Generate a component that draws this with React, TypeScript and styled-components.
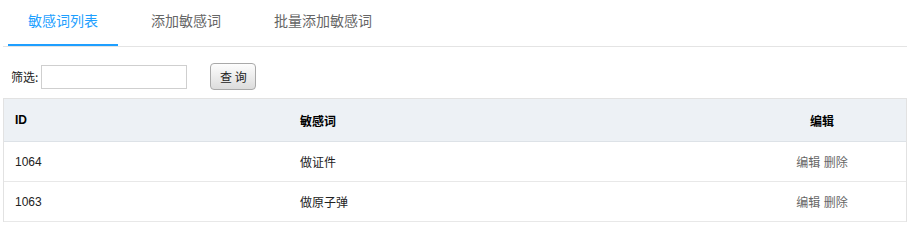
import React from "react";
import styled, { createGlobalStyle } from "styled-components";

const Global = createGlobalStyle`
  html, body { margin: 0; padding: 0; background: #fff; }
  body { font-family: "Liberation Sans", "Noto Sans CJK SC", sans-serif; color: #333; }
  * { box-sizing: border-box; }
`;

const Wrapper = styled.div`
  margin: 0 3px 0 3px;
`;

const TabBar = styled.ul`
  display: flex;
  gap: 13px;
  margin: 0;
  padding: 0 0 0 5px;
  list-style: none;
  border-bottom: 1px solid #e4e4e4;
`;

const Tab = styled.li<{ $active?: boolean }>`
  padding: 0 20px 4px;
  line-height: 40px;
  font-size: 14px;
  font-family: "Noto Sans CJK SC", sans-serif;
  color: ${(p) => (p.$active ? "#1E9FFF" : "#666")};
  border-bottom: 2px solid ${(p) => (p.$active ? "#1E9FFF" : "transparent")};
  cursor: pointer;
`;

const FilterRow = styled.div`
  display: flex;
  align-items: center;
  height: 27px;
  margin: 16px 0 8px;
  padding-left: 8px;
`;

const Label = styled.span`
  font-size: 12px;
  font-family: "Noto Sans CJK SC", sans-serif;
  color: #222;
`;

const Input = styled.input`
  margin-left: 3px;
  width: 146px;
  height: 24px;
  border: 1px solid #cfcfcf;
  padding: 0 4px;
  outline: none;
  font-size: 12px;
`;

const Button = styled.button`
  margin-left: 23px;
  width: 46px;
  height: 27px;
  border: 1px solid #a9a9a9;
  border-radius: 4px;
  background: linear-gradient(#fdfdfd, #dcdcdc);
  font-size: 12px;
  font-family: "Noto Sans CJK SC", sans-serif;
  color: #222;
  padding: 0;
  white-space: pre;
`;

const Table = styled.div`
  border: 1px solid #e2e2e2;
  border-bottom: none;
`;

const Row = styled.div<{ $head?: boolean }>`
  display: grid;
  grid-template-columns: 285px 449px 1fr;
  align-items: center;
  height: ${(p) => (p.$head ? "43px" : "40px")};
  background: ${(p) => (p.$head ? "#edf1f5" : "#fff")};
  border-bottom: 1px solid ${(p) => (p.$head ? "#dde2e7" : "#e8e8e8")};
  font-size: 12px;
  font-weight: ${(p) => (p.$head ? "bold" : "normal")};
  color: ${(p) => (p.$head ? "#000" : "#222")};
`;

const Cell = styled.div<{ $center?: boolean }>`
  padding-left: ${(p) => (p.$center ? "0" : "11px")};
  text-align: ${(p) => (p.$center ? "center" : "left")};
`;

const Action = styled.a`
  color: #666;
  text-decoration: none;
  cursor: pointer;
`;

const rows = [
  { id: 1064, word: "做证件" },
  { id: 1063, word: "做原子弹" },
];

export default function App() {
  return (
    <Wrapper>
      <Global />
      <TabBar>
        <Tab $active>敏感词列表</Tab>
        <Tab>添加敏感词</Tab>
        <Tab>批量添加敏感词</Tab>
      </TabBar>
      <FilterRow>
        <Label>筛选:</Label>
        <Input />
        <Button>{"查 询"}</Button>
      </FilterRow>
      <Table>
        <Row $head>
          <Cell>ID</Cell>
          <Cell>敏感词</Cell>
          <Cell $center>编辑</Cell>
        </Row>
        {rows.map((r) => (
          <Row key={r.id}>
            <Cell>{r.id}</Cell>
            <Cell>{r.word}</Cell>
            <Cell $center>
              <Action>编辑</Action> <Action>删除</Action>
            </Cell>
          </Row>
        ))}
      </Table>
    </Wrapper>
  );
}
